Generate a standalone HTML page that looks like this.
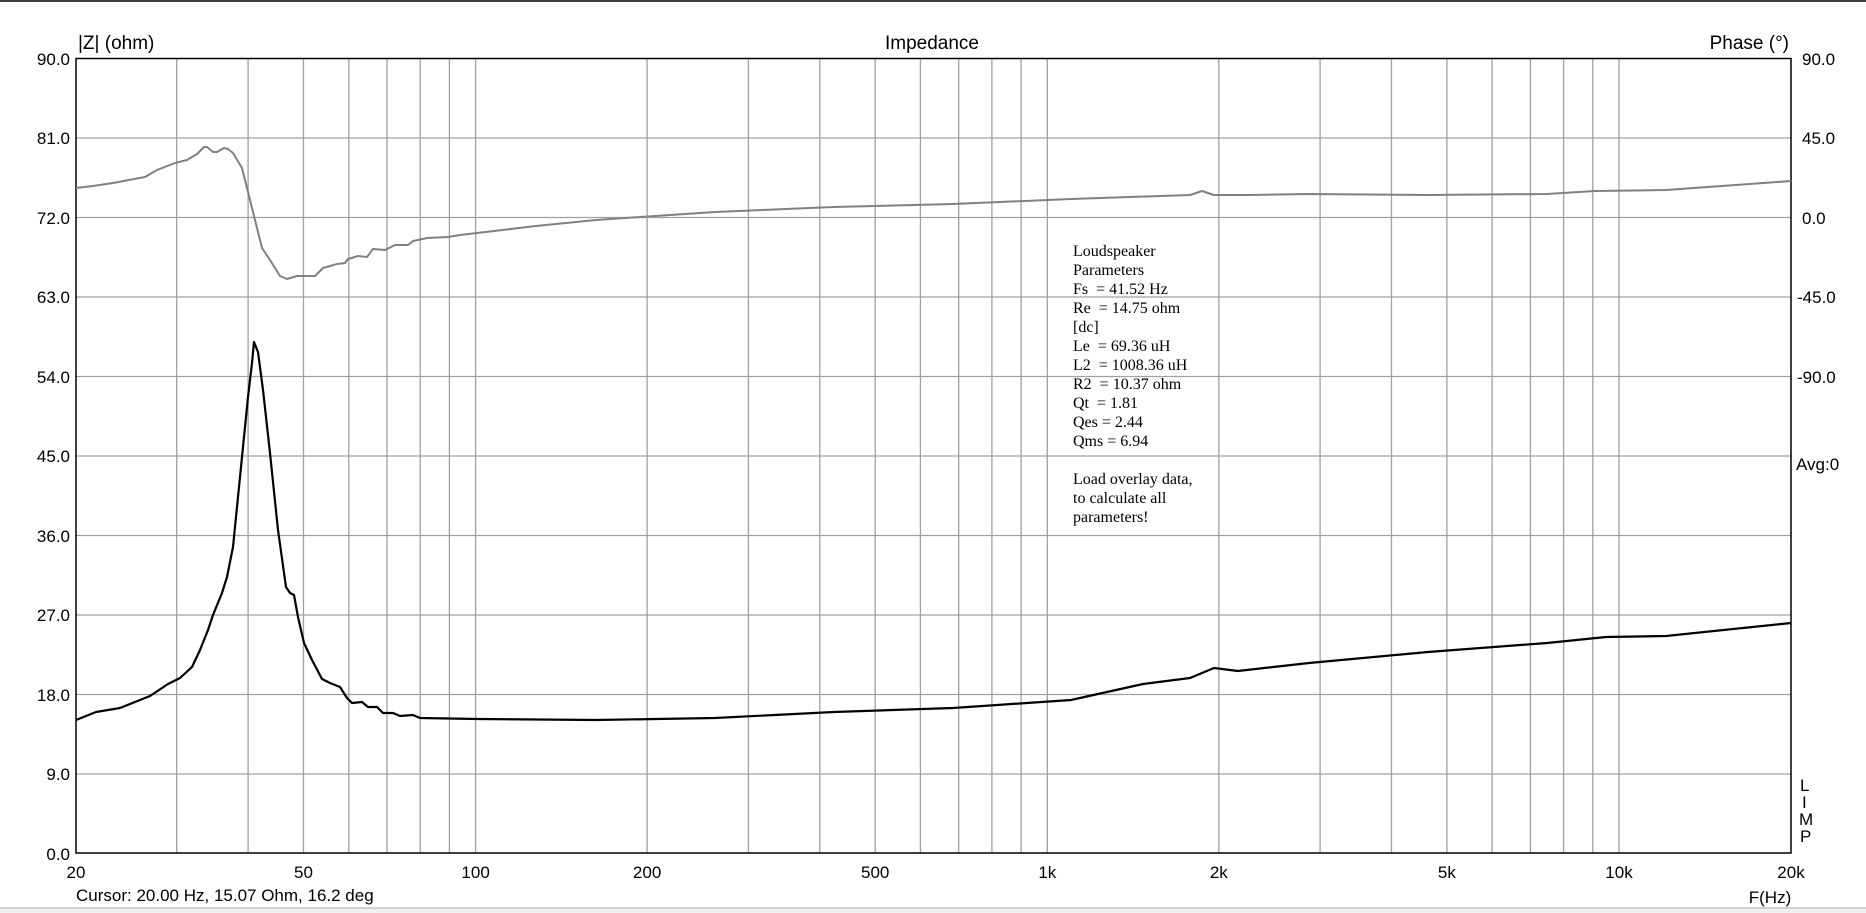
<!DOCTYPE html>
<html><head><meta charset="utf-8"><style>
html,body{margin:0;padding:0;background:#fff;width:1866px;height:913px;overflow:hidden}
svg{display:block}
text{font-family:"Liberation Sans",Arial,sans-serif;fill:#000}
.s{font-family:"Liberation Serif",serif;font-size:16px}
</style></head><body>
<svg width="1866" height="913" viewBox="0 0 1866 913" xmlns="http://www.w3.org/2000/svg">
<rect x="0" y="0" width="1866" height="2" fill="#404040"/>
<rect x="0" y="907" width="1866" height="6" fill="#f0f0f0"/>
<rect x="0" y="907" width="1866" height="2" fill="#d4d0c8"/>
<g stroke="#a0a0a0" stroke-width="1.3" fill="none">
<path d="M76 138H1791M76 217.5H1791M76 297H1791M76 376.5H1791M76 456H1791M76 535.5H1791M76 615H1791M76 694.5H1791M76 774H1791"/>
<path d="M176.7 58.5V853M248.1 58.5V853M303.5 58.5V853M348.8 58.5V853M387 58.5V853M420.2 58.5V853M449.4 58.5V853M475.6 58.5V853M647.1 58.5V853M748.4 58.5V853M819.8 58.5V853M875.2 58.5V853M920.4 58.5V853M958.7 58.5V853M991.9 58.5V853M1021.1 58.5V853M1047.3 58.5V853M1218.8 58.5V853M1320.1 58.5V853M1391.5 58.5V853M1446.9 58.5V853M1492.1 58.5V853M1530.4 58.5V853M1563.6 58.5V853M1592.8 58.5V853M1619 58.5V853"/>
</g>
<rect x="76" y="58.5" width="1715" height="794.5" fill="none" stroke="#000" stroke-width="1.5"/>
<polyline fill="none" stroke="#808080" stroke-width="2" stroke-linejoin="round" points="76,188 93,186 113,183 145,177 157,170 175,163 187,160 197,154 204,147 207,147 213,152 217,152 224,148 228,149 233,153 242,168 248,192 255,220 262,248 270,260 280,276 287,279 297,276 315,276 323,268 337,264 345,263 348,259 358,256 367,257 373,249 385,250 395,245 408,245 413,241 427,238 448,237 460,235 536,226 596,220 655,216 715,212 834,207 953,204 1071,199 1190,195 1202,191 1214,195 1250,195 1309,194 1428,195 1547,194 1595,191 1666,190 1791,181"/>
<polyline fill="none" stroke="#000" stroke-width="2.2" stroke-linejoin="round" points="76,720 96,712 120,708 150,696 168,684 180,678 192,667 200,650 208,630 213,615 222,593 227,577 233,547 238,497 243,447 248,397 252,363 254,342 258,352 263,390 270,453 278,530 286,587 290,593 294,595 298,617 304,643 312,660 322,679 330,683 340,687 347,698 352,703 362,702 368,707 377,707 383,713 393,713 400,716 413,715 420,718 477,719 596,720 715,718 834,712 953,708 1071,700 1143,684 1190,678 1214,668 1238,671 1309,663 1428,652 1547,643 1606,637 1666,636 1791,623"/>
<g font-size="17" text-anchor="end">
<text x="70" y="65">90.0</text><text x="70" y="144">81.0</text><text x="70" y="224">72.0</text><text x="70" y="303">63.0</text><text x="70" y="383">54.0</text><text x="70" y="462">45.0</text><text x="70" y="542">36.0</text><text x="70" y="621">27.0</text><text x="70" y="701">18.0</text><text x="70" y="780">9.0</text><text x="70" y="860">0.0</text>
</g>
<g font-size="17">
<text x="1802" y="65">90.0</text><text x="1802" y="144">45.0</text><text x="1802" y="224">0.0</text><text x="1797" y="303">-45.0</text><text x="1797" y="383">-90.0</text><text x="1796" y="470">Avg:0</text>
<text x="1800" y="791">L</text><text x="1802" y="808">I</text><text x="1799" y="825">M</text><text x="1800" y="842">P</text>
</g>
<g font-size="17" text-anchor="middle">
<text x="76" y="878">20</text><text x="303.5" y="878">50</text><text x="475.6" y="878">100</text><text x="647.1" y="878">200</text><text x="875.2" y="878">500</text><text x="1047.3" y="878">1k</text><text x="1218.8" y="878">2k</text><text x="1446.9" y="878">5k</text><text x="1619" y="878">10k</text><text x="1791" y="878">20k</text>
<text x="932" y="49" font-size="19">Impedance</text>
<text x="1770" y="903">F(Hz)</text>
</g>
<text x="78" y="49" font-size="19">|Z| (ohm)</text>
<text x="1789" y="49" font-size="19" text-anchor="end">Phase (°)</text>
<text x="76" y="901" font-size="17">Cursor: 20.00 Hz, 15.07 Ohm, 16.2 deg</text>
<text class="s" x="1073" y="256">Loudspeaker</text>
<text class="s" x="1073" y="275">Parameters</text>
<text class="s" x="1073" y="294" xml:space="preserve">Fs  = 41.52 Hz</text>
<text class="s" x="1073" y="313" xml:space="preserve">Re  = 14.75 ohm</text>
<text class="s" x="1073" y="332">[dc]</text>
<text class="s" x="1073" y="351" xml:space="preserve">Le  = 69.36 uH</text>
<text class="s" x="1073" y="370" xml:space="preserve">L2  = 1008.36 uH</text>
<text class="s" x="1073" y="389" xml:space="preserve">R2  = 10.37 ohm</text>
<text class="s" x="1073" y="408" xml:space="preserve">Qt  = 1.81</text>
<text class="s" x="1073" y="427">Qes = 2.44</text>
<text class="s" x="1073" y="446">Qms = 6.94</text>
<text class="s" x="1073" y="484">Load overlay data,</text>
<text class="s" x="1073" y="503">to calculate all</text>
<text class="s" x="1073" y="522">parameters!</text>
</svg>
</body></html>
